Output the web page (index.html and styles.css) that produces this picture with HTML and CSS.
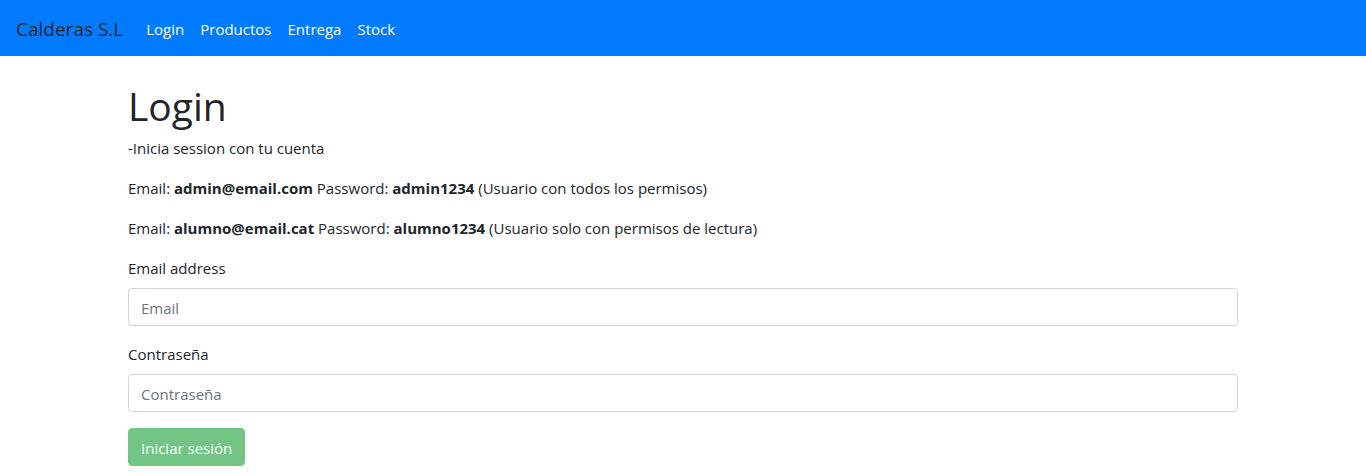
FILE: index.html
```html
<!DOCTYPE html>
<html lang="es">
<head>
<meta charset="utf-8">
<title>Calderas S.L</title>
<link rel="stylesheet" href="styles.css">
</head>
<body>
<nav class="navbar">
  <a class="brand" href="#">Calderas S.L</a>
  <a class="nav-link" href="#">Login</a>
  <a class="nav-link" href="#">Productos</a>
  <a class="nav-link" href="#">Entrega</a>
  <a class="nav-link" href="#">Stock</a>
</nav>
<main class="content">
  <h1 class="title">Login</h1>
  <p class="text">-Inicia session con tu cuenta</p>
  <p class="text">Email: <b>admin@email.com</b> Password: <b>admin1234</b> (Usuario con todos los permisos)</p>
  <p class="text">Email: <b>alumno@email.cat</b> Password: <b>alumno1234</b> (Usuario solo con permisos de lectura)</p>
  <form class="form">
    <div class="group">
      <label class="label" for="email">Email address</label>
      <input class="input" id="email" type="email" placeholder="Email">
    </div>
    <div class="group">
      <label class="label" for="password">Contraseña</label>
      <input class="input" id="password" type="password" placeholder="Contraseña">
    </div>
    <button class="submit" type="submit" disabled>Iniciar sesión</button>
  </form>
</main>
</body>
</html>
```
FILE: styles.css
```css
* { box-sizing: border-box; }
body {
  margin: 0;
  background: #fff;
  color: #212529;
  font: 15px/24px "Open Sans", "Noto Sans", sans-serif;
}
.navbar {
  display: flex;
  align-items: center;
  min-height: 56px;
  padding: 9px 16px 7px;
  background: #007bff;
}
.brand {
  margin-right: 15px;
  color: #212529;
  font-size: 19px;
  line-height: 30px;
  text-decoration: none;
}
.nav-link {
  padding: 8px;
  color: #fff;
  text-decoration: none;
}
.content { padding: 24px 128px 8px; }
.title {
  margin: 0 0 4px;
  font-size: 39px;
  font-weight: 400;
  line-height: 52px;
}
.text { margin: 0 0 16px; }
.group { margin-bottom: 16px; }
.label { display: block; margin-bottom: 8px; }
.input {
  display: block;
  width: 100%;
  padding: 7px 12px 5px;
  border: 1px solid #ced4da;
  border-radius: 4px;
  background: #fff;
  color: #495057;
  font: inherit;
}
.input::placeholder { color: #6c757d; opacity: 1; }
.submit {
  padding: 7px 12px 5px;
  border: 1px solid #28a745;
  border-radius: 4px;
  background: #28a745;
  color: #fff;
  font: inherit;
  opacity: 0.65;
}
```
